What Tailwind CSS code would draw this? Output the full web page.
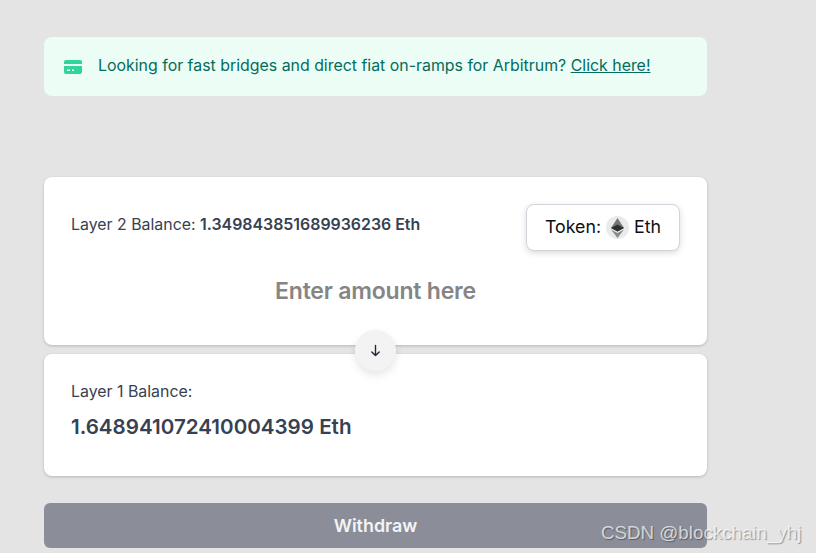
<!DOCTYPE html>
<html lang="en">
<head>
  <meta charset="UTF-8">
  <title>Withdraw</title>
  <script src="https://cdn.jsdelivr.net/npm/@tailwindcss/browser@4"></script>
</head>
<body class="h-[553px] w-[816px] overflow-hidden bg-[#e4e4e4] font-['Inter',sans-serif] relative">
  <div class="w-[663px] ml-[44px] pt-[37px]">
    <!-- Banner -->
    <div class="h-[59px] rounded-lg bg-[#ebfdf5] flex items-center px-5 text-[15.9px] text-[#046c5e]">
      <svg class="w-[20px] h-[20px] mr-[15px] -ml-[1px] shrink-0 text-[#31d59c]" viewBox="0 0 20 20" fill="currentColor">
        <path d="M3 3h14a2 2 0 0 1 2 2v2H1V5a2 2 0 0 1 2-2z"/>
        <path fill-rule="evenodd" d="M1 9h18v6a2 2 0 0 1-2 2H3a2 2 0 0 1-2-2V9zm3 3.500v1.500h3v-1.500H4zm5 0v1.500h2v-1.500H9z"/>
      </svg>
      <p class="-mt-[1px]">Looking for fast bridges and direct fiat on-ramps for Arbitrum? <a class="underline">Click here!</a></p>
    </div>

    <!-- Layer 2 card -->
    <div class="mt-[81px] h-[168px] rounded-lg bg-white shadow-[0_1px_3px_rgba(0,0,0,0.2)] px-[27px] pt-[27px]">
      <div class="flex items-center justify-between">
        <p class="-mt-[6px] text-[15.9px] text-[#374151]">Layer 2 Balance: <span class="font-semibold">1.349843851689936236 Eth</span></p>
        <div class="w-[154px] h-[47px] rounded-lg border border-[#d1d5db] bg-white shadow-[0_2px_6px_rgba(0,0,0,0.15)] flex items-center justify-center gap-[5px] text-[17.8px] text-[#0b0f19]">
          <span>Token:</span>
          <span class="w-[23px] h-[23px] rounded-full bg-[#e9ebeb] flex items-center justify-center">
            <svg class="w-[13px] h-[20px] blur-[0.6px]" viewBox="0 0 13 20">
              <path fill="#777" d="M6.500 0L0 10l6.500 3.600L13 10z"/>
              <path fill="#2f2f2f" d="M6.500 6.500L0 10l6.500 3.600L13 10z"/>
              <path fill="#8a8a8a" d="M0 11.400L6.500 20l6.500-8.600-6.500 3.700z"/>
            </svg>
          </span>
          <span>Eth</span>
        </div>
      </div>
      <p class="mt-[23px] text-center text-[23px] font-semibold text-[#858585] tracking-[-0.2px]">Enter amount here</p>
    </div>

    <!-- Arrow -->
    <div class="relative h-[9px] z-10">
      <div class="absolute left-[311px] top-[-15px] w-[41px] h-[41px] rounded-full bg-[#f3f3f3] shadow-[0_4px_8px_rgba(0,0,0,0.1)] flex items-center justify-center">
        <svg class="w-[13px] h-[13px] text-[#1f2937]" viewBox="0 0 14 14" fill="none" stroke="currentColor" stroke-width="1.5" stroke-linecap="round" stroke-linejoin="round">
          <path d="M7 1.500v11M3 8.500l4 4 4-4"/>
        </svg>
      </div>
    </div>

    <!-- Layer 1 card -->
    <div class="h-[122px] rounded-lg bg-white shadow-[0_1px_3px_rgba(0,0,0,0.2)] px-[27px] pt-[28px]">
      <p class="text-[15.9px] leading-[20px] text-[#374151]">Layer 1 Balance:</p>
      <p class="mt-[11px] text-[20.6px] leading-[28px] font-semibold text-[#374151]">1.648941072410004399 Eth</p>
    </div>

    <!-- Withdraw button -->
    <div class="mt-[27px] h-[45px] rounded-md bg-[#8b8e99] flex items-center justify-center pt-[2px] text-[17.9px] font-semibold text-[#f3f4f6]">Withdraw</div>
  </div>

  <!-- Watermark -->
  <div class="absolute left-[601px] top-[521px] text-[18.75px] leading-[24px] text-[#ffffff]/70 font-['Liberation_Sans',sans-serif] [text-shadow:1px_1px_1px_rgba(0,0,0,0.35)]">CSDN @blockchain_yhj</div>
</body>
</html>
